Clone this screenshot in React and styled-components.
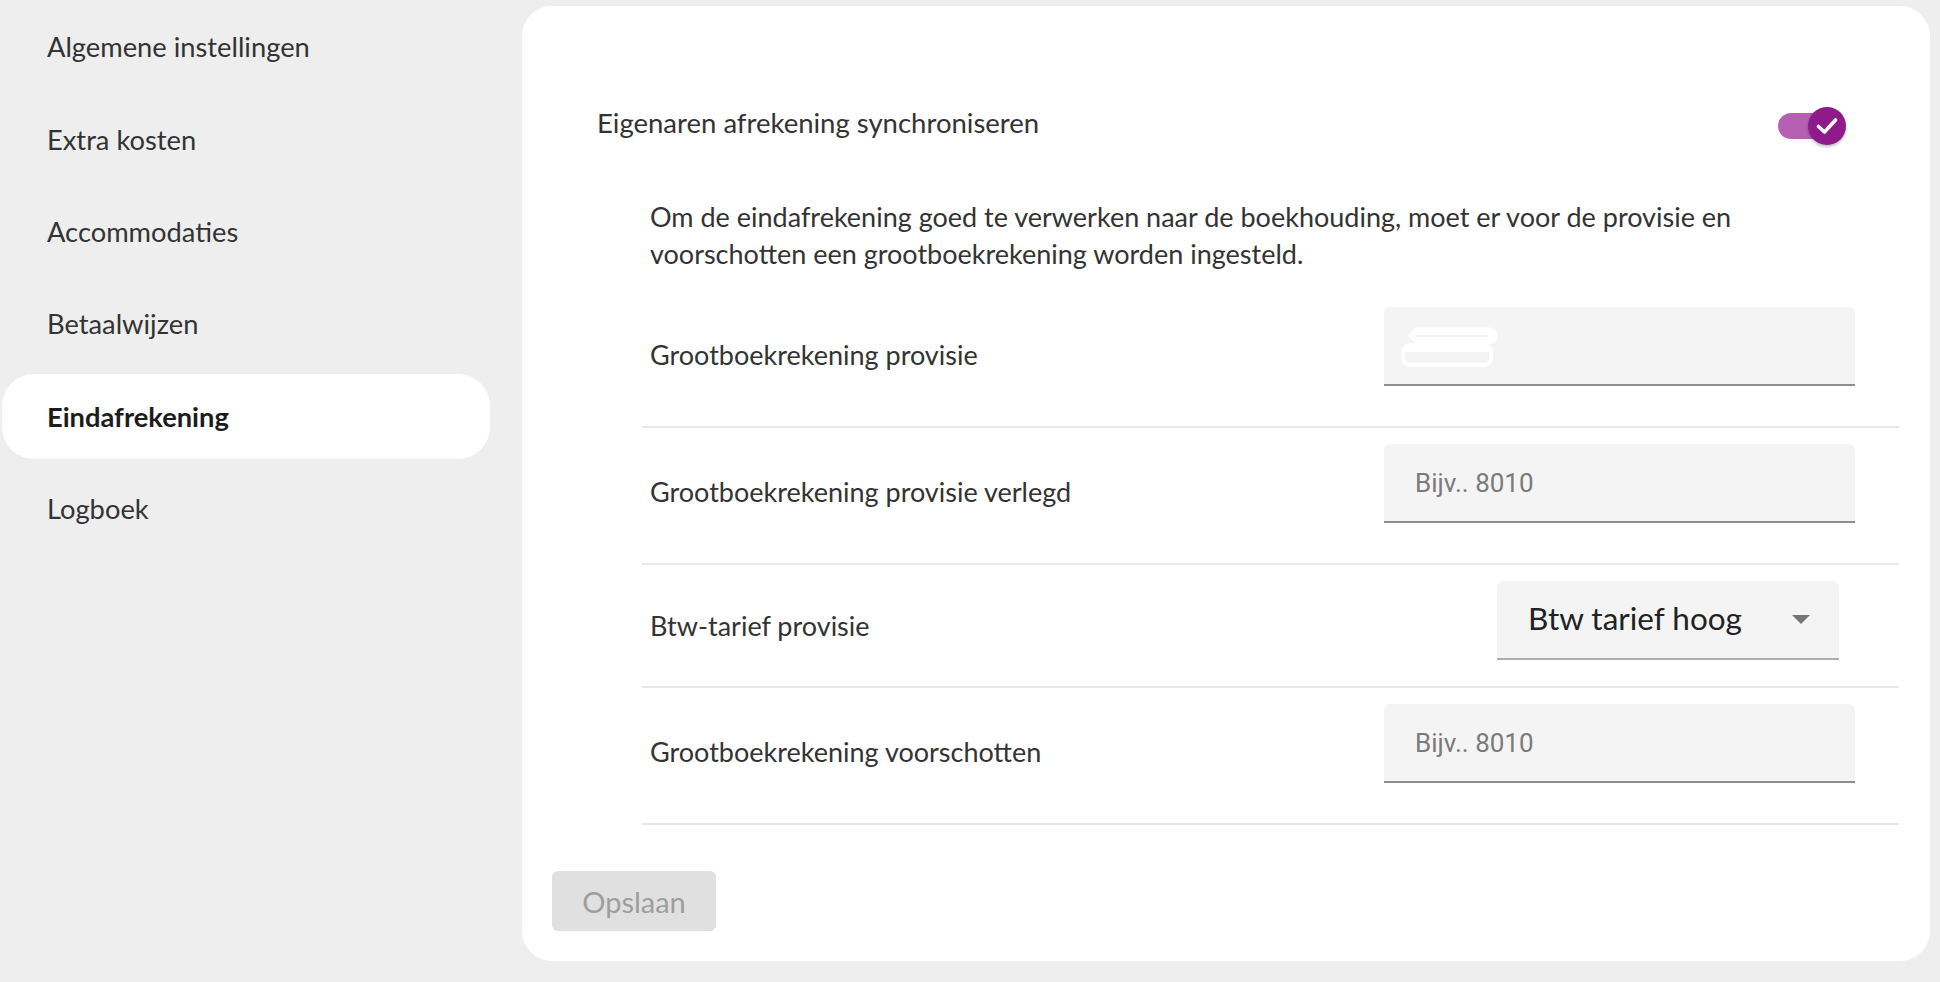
import React, { useState } from "react";
import styled, { createGlobalStyle } from "styled-components";

const GlobalStyle = createGlobalStyle`
  html, body {
    margin: 0;
    padding: 0;
    background: #eeeeee;
  }
  body {
    font-family: Lato, "Noto Sans", sans-serif;
    color: #333333;
  }
  * {
    box-sizing: border-box;
  }
`;

const menuItems = [
  "Algemene instellingen",
  "Extra kosten",
  "Accommodaties",
  "Betaalwijzen",
  "Eindafrekening",
  "Logboek",
];

const rows = [
  { label: "Grootboekrekening provisie", kind: "masked" },
  { label: "Grootboekrekening provisie verlegd", kind: "input" },
  { label: "Btw-tarief provisie", kind: "select" },
  { label: "Grootboekrekening voorschotten", kind: "input" },
];

const MaskedValue = () => (
  <svg width="100" height="42" viewBox="0 0 100 42">
    <path d="M 16 3 H 89 A 7 7 0 0 1 89 17 H 16 L 10 10 Z" fill="#ffffff" stroke="#ffffff" strokeWidth="3" strokeLinejoin="round" />
    <path d="M 16 10 H 88" stroke="#ebebeb" strokeWidth="1" />
    <rect x="3" y="19" width="88" height="20" rx="7" fill="none" stroke="#ffffff" strokeWidth="4" />
    <rect x="3" y="19" width="88" height="7" rx="3" fill="#ffffff" />
  </svg>
);

const Toggle = ({ on, onClick }) => (
  <Switch onClick={onClick} aria-checked={on} role="switch">
    <Track on={on} />
    <Thumb on={on}>
      {on && (
        <svg width="30" height="30" viewBox="0 0 30 30">
          <path d="M 6.5 15.5 L 12.5 21 L 23.5 9" fill="none" stroke="#ffffff" strokeWidth="3.6" strokeLinecap="round" strokeLinejoin="round" />
        </svg>
      )}
    </Thumb>
  </Switch>
);

export default function App() {
  const [active, setActive] = useState("Eindafrekening");
  const [sync, setSync] = useState(true);

  return (
    <Page>
      <GlobalStyle />
      <Sidebar>
        {menuItems.map((item) => (
          <MenuItem key={item} active={item === active} onClick={() => setActive(item)}>
            {item}
          </MenuItem>
        ))}
      </Sidebar>

      <Card>
        <Header>
          <Title>Eigenaren afrekening synchroniseren</Title>
          <Toggle on={sync} onClick={() => setSync(!sync)} />
        </Header>

        <Section>
          <Description>
            Om de eindafrekening goed te verwerken naar de boekhouding, moet er voor de provisie en
            voorschotten een grootboekrekening worden ingesteld.
          </Description>

          {rows.map((row) => (
            <Row key={row.label}>
              <Label centered={row.kind === "select"}>{row.label}</Label>
              {row.kind === "select" ? (
                <Select>
                  <SelectValue>Btw tarief hoog</SelectValue>
                  <Caret />
                </Select>
              ) : (
                <Field>
                  {row.kind === "masked" ? (
                    <MaskWrap>
                      <MaskedValue />
                    </MaskWrap>
                  ) : (
                    <Input placeholder="Bijv.. 8010" />
                  )}
                </Field>
              )}
            </Row>
          ))}
        </Section>

        <SaveButton disabled>Opslaan</SaveButton>
      </Card>
    </Page>
  );
}

const Page = styled.div`
  display: flex;
  align-items: flex-start;
  gap: 32px;
  padding: 6px 10px 23px 2px;
  min-height: 982px;
`;

const Sidebar = styled.nav`
  width: 488px;
  flex-shrink: 0;
  display: flex;
  flex-direction: column;
  gap: 7.3px;
  margin-top: -1.6px;
`;

const MenuItem = styled.div`
  height: 85px;
  display: flex;
  align-items: center;
  padding-left: 45px;
  border-radius: 32px;
  font-size: 27.3px;
  font-weight: ${(p) => (p.active ? 700 : 400)};
  color: ${(p) => (p.active ? "#1c1c1c" : "#333333")};
  background: ${(p) => (p.active ? "#ffffff" : "transparent")};
  cursor: pointer;
`;

const Card = styled.main`
  flex: 1;
  background: #ffffff;
  border-radius: 30px;
  padding: 30px 31px 30px 30px;
  display: flex;
  flex-direction: column;
  align-items: flex-start;
`;

const Header = styled.div`
  align-self: stretch;
  height: 60px;
  margin: 60px 53px 0 45px;
  display: flex;
  align-items: center;
  justify-content: space-between;
`;

const Title = styled.div`
  font-size: 27.5px;
  color: #333333;
  padding-bottom: 7px;
`;

const Switch = styled.div`
  position: relative;
  width: 68px;
  height: 38px;
  cursor: pointer;
`;

const Track = styled.div`
  position: absolute;
  left: 0;
  top: 6px;
  width: 60px;
  height: 26px;
  border-radius: 13px;
  background: ${(p) => (p.on ? "#b660b4" : "#c4c4c4")};
`;

const Thumb = styled.div`
  position: absolute;
  top: 0;
  left: ${(p) => (p.on ? "30px" : "0px")};
  width: 38px;
  height: 38px;
  border-radius: 50%;
  background: ${(p) => (p.on ? "#8f1a8b" : "#fafafa")};
  box-shadow: 0 2px 3px rgba(0, 0, 0, 0.25);
  display: flex;
  align-items: center;
  justify-content: center;
`;

const Section = styled.div`
  align-self: stretch;
  margin: 42px 0 0 90px;
  display: flex;
  flex-direction: column;
`;

const Description = styled.p`
  margin: 0 0 19px 8px;
  max-width: 1130px;
  font-size: 27px;
  line-height: 37px;
  color: #333333;
`;

const Row = styled.div`
  display: flex;
  align-items: center;
  justify-content: space-between;
  padding: 16px 44px 16px 8px;
  border-bottom: 2px solid #e8e8e8;
`;

const Label = styled.div`
  font-size: 27px;
  color: #333333;
  padding-bottom: ${(p) => (p.centered ? "0" : "8px")};
`;

const Field = styled.div`
  width: 471px;
  height: 79px;
  margin-bottom: 24px;
  background: #f4f4f4;
  border-radius: 6px 6px 0 0;
  border-bottom: 2px solid #8e8e8e;
  display: flex;
  align-items: center;
`;

const MaskWrap = styled.div`
  display: flex;
  padding: 2px 0 0 16px;
`;

const Input = styled.input`
  width: 100%;
  height: 100%;
  border: none;
  outline: none;
  background: transparent;
  padding: 0 31px;
  font-family: Roboto, "Liberation Sans", sans-serif;
  font-size: 26px;
  color: #333333;
  &::placeholder {
    color: #7a7a7a;
  }
`;

const Select = styled.div`
  width: 342px;
  height: 79px;
  margin: 0 16px 10px 0;
  background: #f4f4f4;
  border-radius: 6px 6px 0 0;
  border-bottom: 2px solid #acacac;
  display: flex;
  align-items: center;
  justify-content: space-between;
  padding: 0 29px 0 31px;
  cursor: pointer;
`;

const SelectValue = styled.span`
  font-size: 31.5px;
  color: #222222;
  padding-bottom: 4px;
`;

const Caret = styled.span`
  width: 0;
  height: 0;
  border-left: 9.5px solid transparent;
  border-right: 9.5px solid transparent;
  border-top: 9.5px solid #757575;
`;

const SaveButton = styled.button`
  margin-top: 46px;
  width: 164px;
  height: 60px;
  border: none;
  border-radius: 6px;
  background: #e0e0e0;
  color: #9e9e9e;
  font-family: Lato, "Noto Sans", sans-serif;
  font-size: 29px;
`;
